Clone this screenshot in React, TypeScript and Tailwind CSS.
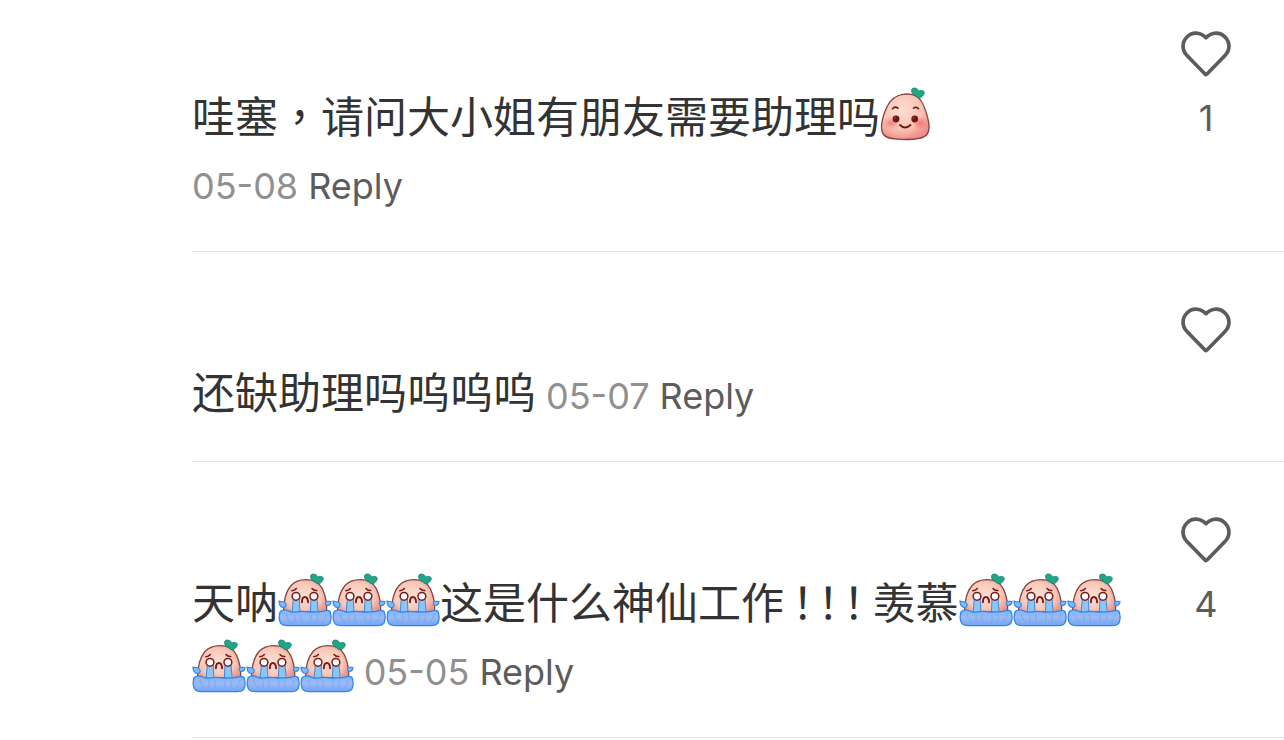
import { Fragment } from "react";
import type { ReactNode } from "react";

function Leaf() {
  return (
    <path
      d="M33.500 7.500C31.300 5.500 30.800 2.300 32.800 1.300C35 .4 38 1.600 38.600 4.200C40.300 2.900 43.300 3.200 44.400 5C44 8.500 41.500 10.800 38.500 10.600C36.500 10.400 36.200 8.600 33.500 7.500Z"
      fill="#1fa587"
      stroke="#128069"
      strokeWidth="0.8"
    />
  );
}

function SmilingPeach() {
  return (
    <svg viewBox="0 0 54 54" role="img" aria-label="smiling" className="inline-block size-[54px] align-[-8px]">
      <defs>
        <radialGradient id="smile-skin" cx="0.42" cy="0.36" r="0.65">
          <stop offset="0" stopColor="#fddfd2" />
          <stop offset="0.65" stopColor="#f9c2b4" />
          <stop offset="1" stopColor="#ef908a" />
        </radialGradient>
        <radialGradient id="smile-blush">
          <stop offset="0" stopColor="#f4655f" stopOpacity="0.75" />
          <stop offset="1" stopColor="#f4655f" stopOpacity="0" />
        </radialGradient>
      </defs>
      <path
        d="M18.500 8.500C27 5.500 36 7 40.500 13C44 18 46 24 47.500 30C49.500 37 50.500 43.500 46.500 48C43 52 35 52.500 25 52.500C15 52.500 7 52 3.500 47.500C.3 43.500 1.800 34 4 27C7 17.500 11.500 11 18.500 8.500Z"
        fill="url(#smile-skin)"
        stroke="#8a4440"
        strokeWidth="1.3"
      />
      <Leaf />
      <ellipse cx="11" cy="36" rx="8" ry="6.5" fill="url(#smile-blush)" />
      <ellipse cx="40" cy="36" rx="8" ry="6.5" fill="url(#smile-blush)" />
      <g fill="none" stroke="#6b1713" strokeWidth="1.500" strokeLinecap="round">
        <path d="M12.500 21.800Q15 18.800 18 21.200" />
        <path d="M33.500 21.200Q36 18.800 38.500 21.800" />
        <path d="M20 38Q25 43 30.500 38" strokeWidth="1.800" />
      </g>
      <circle cx="16" cy="32" r="3.400" fill="#711713" />
      <circle cx="34.700" cy="32" r="3.400" fill="#711713" />
      <circle cx="15" cy="30.800" r="0.800" fill="#b85b54" />
      <circle cx="33.700" cy="30.800" r="0.800" fill="#b85b54" />
    </svg>
  );
}

function CryingPeach() {
  return (
    <svg viewBox="-1 0 54 54" role="img" aria-label="crying" className="inline-block size-[54px] align-[-8px]">
      <defs>
        <radialGradient id="cry-skin" cx="0.45" cy="0.5" r="0.62">
          <stop offset="0" stopColor="#fce0d3" />
          <stop offset="0.65" stopColor="#f8c8b9" />
          <stop offset="1" stopColor="#e8968b" />
        </radialGradient>
        <linearGradient id="cry-pool" x1="0" y1="0" x2="0" y2="1">
          <stop offset="0" stopColor="#7ab6fb" />
          <stop offset="0.5" stopColor="#9cb9f3" />
          <stop offset="1" stopColor="#6ba4fb" />
        </linearGradient>
      </defs>
      <path
        d="M4.500 39C4.500 29 6.500 19 12 12.500C16.500 7.500 21 6.700 27 6.700C35 6.700 40.500 9.500 43.500 16C46.500 23 48.500 30 47.500 39Z"
        fill="url(#cry-skin)"
        stroke="#86443f"
        strokeWidth="1.3"
      />
      <Leaf />
      <g fill="#8ec5f3" stroke="#3d8be0" strokeWidth="1">
        <path d="M14.300 26H20.300L21 41H13Z" />
        <path d="M32 26H38L39.300 41H31.300Z" />
      </g>
      <g fill="#fff" stroke="#761b17" strokeWidth="1.500">
        <circle cx="17" cy="23.300" r="3.900" />
        <circle cx="34.900" cy="23.300" r="3.900" />
      </g>
      <g fill="none" stroke="#761b17" strokeWidth="1.600" strokeLinecap="round">
        <path d="M12.800 17.800Q15.500 17.800 17.400 15.600" />
        <path d="M33 15.600Q34.800 17.800 37.800 17.500" />
        <path d="M22.900 29.300C23 22.300 28.700 22.300 29.100 29.300" strokeWidth="1.900" />
      </g>
      <path
        d="M1.200 38.500C4 36.500 7 36.500 10 38C14 40 17 39.200 21 38.500C25 37.700 28 39.500 32 39C37 38.400 40 39.500 44 38.200C47 37.200 49.500 37 51 38.500C52.300 42 52.200 47 51 50C49.500 52.500 47 52.700 44 52.700H9C6 52.700 3 52.700 1.500 50C0 47 0 42 1.200 38.500Z"
        fill="url(#cry-pool)"
        stroke="#2f83ee"
        strokeWidth="1.300"
      />
      <g fill="none" stroke="#668fde" strokeWidth="0.900" opacity="0.450">
        <path d="M7 41C8 45 9 47 12 49" />
        <path d="M16 42V49" />
        <path d="M22 41C21.500 44 22 47 23 49" />
        <path d="M32 42V49" />
        <path d="M38 41C39 44 38.500 47 37 49" />
        <path d="M47 41C46.500 45 45 47 43 49" />
      </g>
      <g fill="#7dbbf7" stroke="#2f83ee" strokeWidth="1.100">
        <path d="M0 28C-.3 31 1.500 34.500 4.300 34.500C7 34.500 8 31.800 6.500 30C5 28.300 3 29.300 0 28Z" />
        <path d="M52 28.500C50.400 28.800 49 27.600 47.200 28.600C45.500 30 46.200 32 48 32.400C50.300 32.700 52 31 52 28.500Z" />
      </g>
    </svg>
  );
}

function CryingPeaches({ count }: { count: number }) {
  return (
    <>
      {Array.from({ length: count }, (_, i) => (
        <Fragment key={i}>
          <CryingPeach />
          <wbr />
        </Fragment>
      ))}
    </>
  );
}

function HeartIcon() {
  return (
    <svg viewBox="0 0 50 46" aria-hidden="true" className="h-[46px] w-[50px]">
      <path
        d="M25 6.800C19 .8 11.200 .8 6 6C.7 11.400 .7 19 6 24.500L24 43Q25 44 26 43L44 24.500C49.300 19 49.300 11.400 44 6C38.800 .8 31 .8 25 6.800Z"
        fill="none"
        stroke="#5c5c5c"
        strokeWidth="3.700"
        strokeLinejoin="round"
      />
    </svg>
  );
}

type CommentProps = { date: string; likes?: number; children: ReactNode };

function Comment({ date, likes, children }: CommentProps) {
  return (
    <li className="flex border-b border-[#e6e6e6]">
      <div className="min-w-0 flex-1 pt-[105px] pb-[38px] text-[43px] leading-[66px] text-[#333]">
        {children}
        <span className="inline-flex gap-2.5 font-[Inter,sans-serif] text-[36px] leading-none whitespace-nowrap">
          <time className="text-[#909090]">{date}</time>
          <button type="button" className="text-[#5c5c5c]">Reply</button>
        </span>
      </div>
      <button
        type="button"
        aria-label="Like"
        className="flex w-[156px] shrink-0 flex-col items-center gap-2 self-start pt-[55px] font-[Inter,sans-serif] text-[36px] leading-[66px] text-[#5c5c5c]"
      >
        <HeartIcon />
        {likes !== undefined && <span>{likes}</span>}
      </button>
    </li>
  );
}

export default function App() {
  return (
    <main className="overflow-hidden bg-white font-['Noto_Sans_CJK_TC',sans-serif]">
      <ul className="-mt-6 pl-48">
        <Comment date="05-08" likes={1}>
          哇塞，请问大小姐有朋友需要助理吗
          <SmilingPeach />{" "}
        </Comment>
        <Comment date="05-07">
          <span className="mr-2.5">还缺助理吗呜呜呜</span>
        </Comment>
        <Comment date="05-05" likes={4}>
          天呐
          <CryingPeaches count={3} />
          这是什么神仙工作
          <span className="inline-flex gap-1 px-2 [font-feature-settings:'halt']">
            <span>！</span>
            <span>！</span>
            <span>！</span>
          </span>
          羡慕
          <CryingPeaches count={6} />{" "}
        </Comment>
      </ul>
    </main>
  );
}
